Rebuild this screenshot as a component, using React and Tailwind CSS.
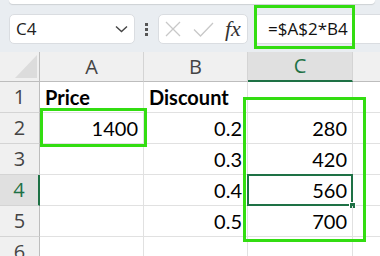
import React from "react";

const cols = ["A", "B", "C"];

const rows = [
  { n: 1, a: "Price", b: "Discount", c: "", bold: true },
  { n: 2, a: "1400", b: "0.2", c: "280" },
  { n: 3, a: "", b: "0.3", c: "420" },
  { n: 4, a: "", b: "0.4", c: "560" },
  { n: 5, a: "", b: "0.5", c: "700" },
  { n: 6, a: "", b: "", c: "" },
];

const Cell = ({ value, bold, selected }) => (
  <div
    className={
      "relative flex items-end border-r border-b border-[#e1e1e1] px-[5px] pb-[2px] text-[20px] leading-[26px] text-black " +
      (bold ? "justify-start font-bold" : "justify-end")
    }
  >
    {value}
    {selected && (
      <div className="absolute -top-px -left-px right-[-1px] bottom-[-1px] border-2 border-[#1e7145]">
        <div className="absolute -right-[5px] -bottom-[5px] h-[7px] w-[7px] border border-white bg-[#1e7145]" />
      </div>
    )}
  </div>
);

export default function App() {
  return (
    <div className="relative h-[256px] w-[380px] overflow-hidden bg-white font-['Lato','Liberation_Sans',sans-serif]">
      {/* formula bar strip */}
      <div className="h-[52px] bg-[#e9edf1]">
        <div className="ml-[9px] h-[4px] w-[366px] rounded-b-[6px] bg-white shadow-[0_1px_1px_rgba(0,0,0,0.12)]" />
        <div className="mt-[10px] flex h-[30px] items-center">
          <div className="ml-[9px] flex h-[30px] w-[126px] items-center justify-between rounded-[5px] border border-[#dadde1] bg-white px-[6px] font-['Open_Sans',sans-serif] text-[17px] text-[#222]">
            <span>C4</span>
            <svg width="13" height="8" viewBox="0 0 13 8" fill="none" stroke="#444" strokeWidth="1.4">
              <path d="M1 1.5l5.5 5 5.5-5" />
            </svg>
          </div>
          <div className="mx-[10px] flex flex-col gap-[2px]">
            <div className="h-[3px] w-[3px] bg-[#555]" />
            <div className="h-[3px] w-[3px] bg-[#555]" />
            <div className="h-[3px] w-[3px] bg-[#555]" />
          </div>
          <div className="flex h-[30px] w-[90px] items-center rounded-[5px] border border-[#dadde1] bg-white pl-[6px]">
            <svg width="16" height="16" viewBox="0 0 16 16" stroke="#c8c8c8" strokeWidth="1.3" fill="none">
              <path d="M1 1l14 14M15 1L1 15" />
            </svg>
            <svg className="ml-[12px]" width="21" height="15" viewBox="0 0 21 15" stroke="#c8c8c8" strokeWidth="1.3" fill="none">
              <path d="M1 7.5l6.5 6.5L20 1" />
            </svg>
            <span className="ml-[11px] font-['Liberation_Serif',serif] text-[22px] italic leading-none text-[#333]">fx</span>
          </div>
          <div className="ml-[6px] flex h-[30px] flex-1 items-center rounded-l-[5px] border border-r-0 border-[#dadde1] bg-white pl-[13px] font-['Open_Sans',sans-serif] text-[17px] text-[#111]">
            =$A$2*B4
          </div>
        </div>
      </div>

      {/* sheet grid */}
      <div className="grid grid-cols-[40px_104px_104px_105px_1fr] grid-rows-[30px_31px_31px_31px_31px_31px_31px]">
        <div className="relative border-r border-b border-[#bdbdbd] bg-[#f0f0f0]">
          <svg className="absolute left-[15px] top-[3px]" width="22" height="23" viewBox="0 0 22 23">
            <path d="M22 0V23H0Z" fill="#dcdcdc" />
          </svg>
        </div>
        {cols.map((c) => (
          <div
            key={c}
            className={
              "flex items-center justify-center border-r border-[#d4d4d4] font-['Open_Sans',sans-serif] text-[20px] " +
              (c === "C"
                ? "border-b-2 border-b-[#1e7145] bg-[#e0e0e0] text-[#1e7145]"
                : "border-b border-b-[#bdbdbd] bg-[#f0f0f0] text-[#444]")
            }
          >
            {c}
          </div>
        ))}
        <div className="border-b border-[#bdbdbd] bg-[#f0f0f0]" />

        {rows.map((r) => (
          <React.Fragment key={r.n}>
            <div
              className={
                "flex items-center justify-center border-b border-[#d4d4d4] font-['Open_Sans',sans-serif] text-[20px] " +
                (r.n === 4
                  ? "border-r-2 border-r-[#1e7145] bg-[#e0e0e0] text-[#1e7145]"
                  : "border-r border-r-[#bdbdbd] bg-[#f0f0f0] text-[#444]")
              }
            >
              {r.n}
            </div>
            <Cell value={r.a} bold={r.bold} />
            <Cell value={r.b} bold={r.bold} />
            <Cell value={r.c} selected={r.n === 4} />
            <div className="border-b border-[#e1e1e1]" />
          </React.Fragment>
        ))}
      </div>

      {/* highlight boxes */}
      <div className="absolute left-[254px] top-[5px] h-[44px] w-[101px] border-[3px] border-[#33dd11]" />
      <div className="absolute left-[40px] top-[108px] h-[39px] w-[107px] border-[3px] border-[#33dd11]" />
      <div className="absolute left-[243px] top-[97px] h-[145px] w-[123px] border-[3px] border-[#33dd11]" />
    </div>
  );
}
